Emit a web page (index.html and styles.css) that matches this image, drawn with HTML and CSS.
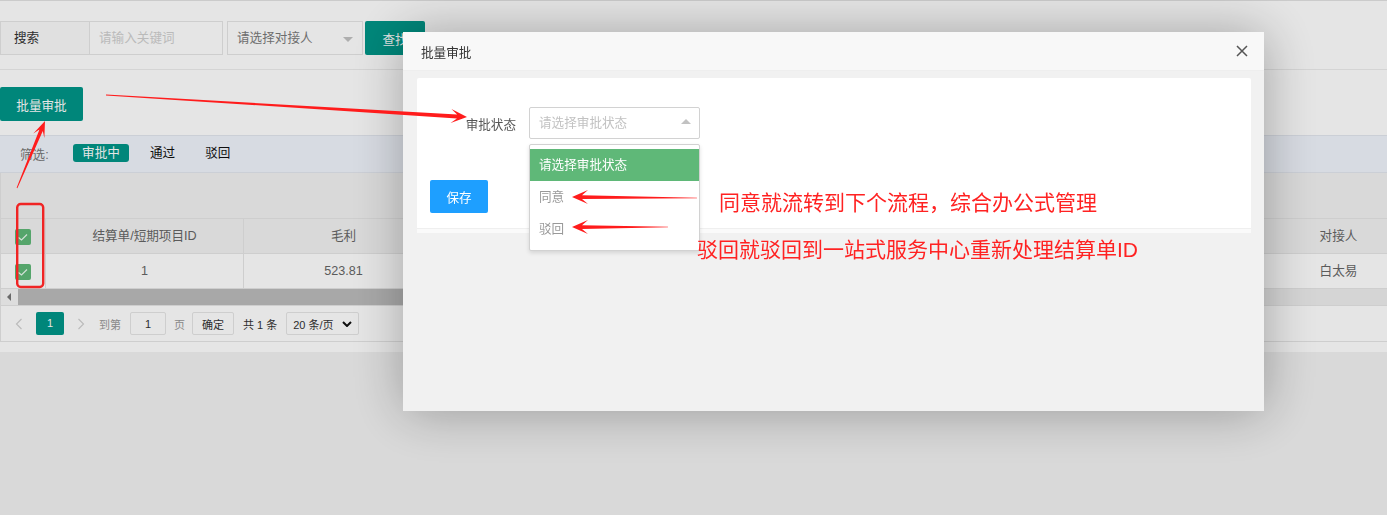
FILE: index.html
```html
<!DOCTYPE html>
<html lang="zh-CN">
<head>
    <meta charset="UTF-8">
    <meta name="viewport" content="width=device-width, initial-scale=1.0">
    <title>结算单审批</title>
    <link rel="stylesheet" href="styles.css">
</head>
<body>

    <div class="page">
        <div class="search-bar">
            <span class="search-label">搜索</span>
            <input class="search-input" type="text" placeholder="请输入关键词">
            <div class="fake-select">请选择对接人<i class="caret-down"></i></div>
            <button class="btn btn-search">查找</button>
        </div>

        <div class="toolbar">
            <button class="btn btn-batch">批量审批</button>
        </div>

        <div class="filter">
            <span class="filter-label">筛选:</span>
            <span class="tag active">审批中</span>
            <span class="tag">通过</span>
            <span class="tag">驳回</span>
        </div>

        <div class="table-box">
            <div class="table-tool"></div>
            <table class="grid">
                <colgroup>
                    <col style="width:45px">
                    <col style="width:198px">
                    <col style="width:200px">
                    <col style="width:200px">
                    <col style="width:200px">
                    <col style="width:200px">
                    <col style="width:200px">
                    <col style="width:190px">
                </colgroup>
                <thead>
                    <tr>
                        <th class="col-check"><span class="checkbox"><svg viewBox="0 0 16 16"><polyline points="3.5,8.5 6.5,11 12,5.5"/></svg></span></th>
                        <th>结算单/短期项目ID</th>
                        <th>毛利</th>
                        <th></th>
                        <th></th>
                        <th></th>
                        <th></th>
                        <th>对接人</th>
                    </tr>
                </thead>
                <tbody>
                    <tr>
                        <td class="col-check"><span class="checkbox"><svg viewBox="0 0 16 16"><polyline points="3.5,8.5 6.5,11 12,5.5"/></svg></span></td>
                        <td>1</td>
                        <td>523.81</td>
                        <td></td>
                        <td></td>
                        <td></td>
                        <td></td>
                        <td>白太易</td>
                    </tr>
                </tbody>
            </table>
            <div class="hscroll">
                <span class="hscroll-btn"></span>
                <span class="hscroll-thumb"></span>
            </div>
            <div class="pager">
                <svg class="pager-arrow" viewBox="0 0 8 12"><polyline points="6.5,1 1.5,6 6.5,11"/></svg>
                <span class="pager-curr">1</span>
                <svg class="pager-arrow pager-next" viewBox="0 0 8 12"><polyline points="1.5,1 6.5,6 1.5,11"/></svg>
                <span class="pager-muted pager-goto">到第</span>
                <input class="pager-input" type="text" value="1">
                <span class="pager-muted pager-unit">页</span>
                <button class="pager-btn">确定</button>
                <span class="pager-count">共 1 条</span>
                <div class="pager-limit">20 条/页<svg viewBox="0 0 10 6"><polyline points="1,1 5,5 9,1"/></svg></div>
            </div>
        </div>
    </div>

    <!-- 遮罩 + 批量审批弹层 -->
    <div class="shade"></div>
    <div class="layer">
        <div class="layer-title">
            <span>批量审批</span>
            <svg class="layer-close" viewBox="0 0 12 12"><path d="M1 1 L11 11 M11 1 L1 11"/></svg>
        </div>
        <div class="layer-body">
            <div class="card">
                <div class="card-body">
                    <div class="form-row">
                        <label class="form-label">审批状态</label>
                        <div class="select-wrap">
                            <div class="select-box">请选择审批状态<i class="caret-up"></i></div>
                            <dl class="select-menu">
                                <dd class="picked">请选择审批状态</dd>
                                <dd>同意</dd>
                                <dd>驳回</dd>
                            </dl>
                        </div>
                    </div>
                    <button class="btn-save">保存</button>
                </div>
                <div class="card-foot"></div>
            </div>
        </div>
    </div>

    <!-- 标注 -->
    <svg class="marks" viewBox="0 0 1387 515">
        <rect x="17.2" y="204" width="26" height="83" rx="3.5"/>
        <polygon points="105.98,95.4 456.9,118.39 450.6,123.02 467,117 451.46,109.04 457.14,114.39 106.02,94.6"/>
        <polygon points="17.37,188.15 42.8,130.92 44.37,138.07 45,121 33.29,133.45 39.48,129.54 16.63,187.85"/>
        <polygon points="697,197.7 582,195.2 588,190 572,197 588,204 582,199 697,198.3"/>
        <polygon points="668,226.7 582,225.2 588,220 572,227 588,234 582,229 668,227.3"/>
    </svg>
    <p class="note note-agree">同意就流转到下个流程，综合办公式管理</p>
    <p class="note note-reject">驳回就驳回到一站式服务中心重新处理结算单ID</p>

</body>
</html>
```

FILE: styles.css
```css
* {
    box-sizing: border-box;
}
html, body {
    margin: 0;
    height: 100%;
    overflow: hidden;
}
body {
    background-color: #f2f2f2;
    font-family: "Liberation Sans", "Noto Sans CJK SC", sans-serif;
    font-size: 12.6px;
    color: #333;
}
.page {
    background: #fff;
    border-top: 1px solid #e2e2e2;
    padding-bottom: 10px;
}

/* 搜索栏 */
.search-bar {
    display: flex;
    padding: 20px 0 14px;
    border-bottom: 1px solid #ececec;
}
.search-label {
    width: 89px;
    height: 34px;
    line-height: 32px;
    padding-left: 13px;
    border: 1px solid #e6e6e6;
    border-right: none;
    background: #fafafa;
    color: #333;
}
.search-input {
    width: 134px;
    height: 34px;
    padding: 0 9px;
    border: 1px solid #e6e6e6;
    font: inherit;
    outline: none;
}
.search-input::placeholder {
    color: #d0d0d0;
}
.fake-select {
    position: relative;
    margin-left: 4px;
    width: 136px;
    height: 34px;
    line-height: 32px;
    padding-left: 9px;
    border: 1px solid #e6e6e6;
    color: #7a7a7a;
}
.caret-down {
    position: absolute;
    right: 9px;
    top: 15px;
    border-top: 5px solid #c2c2c2;
    border-left: 5px solid transparent;
    border-right: 5px solid transparent;
}
.btn {
    height: 34px;
    line-height: 34px;
    padding: 0;
    border: none;
    border-radius: 2px;
    background-color: #009688;
    color: #fff;
    font: inherit;
}
.btn-search {
    margin-left: 2px;
    width: 60px;
}
.toolbar {
    padding: 17px 0 14px;
}
.btn-batch {
    width: 83px;
}

/* 筛选 */
.filter {
    display: flex;
    align-items: center;
    height: 38px;
    padding: 0 0 2px 20px;
    border-top: 1px solid #e3e7ef;
    border-bottom: 1px solid #e3e7ef;
    background: #f0f4fc;
}
.filter-label {
    width: 53px;
    color: #777;
}
.tag {
    height: 18px;
    line-height: 18px;
    padding: 0 9px;
    margin-right: 12px;
    border-radius: 3px;
    color: #111;
}
.tag.active {
    width: 56px;
    text-align: center;
    background: #009688;
    color: #fff;
}

/* 表格 */
.table-box {
    border-left: 1px solid #e6e6e6;
    overflow: hidden;
}
.table-tool {
    height: 46px;
    background: #f2f2f2;
    border-bottom: 1px solid #e6e6e6;
}
.grid {
    width: 1433px;
    table-layout: fixed;
    border-collapse: separate;
    border-spacing: 0;
}
.grid th,
.grid td {
    height: 35px;
    padding: 0;
    line-height: 34px;
    text-align: center;
    font-weight: normal;
    color: #666;
    border-bottom: 1px solid #e6e6e6;
    border-right: 1px solid #e6e6e6;
    white-space: nowrap;
    overflow: hidden;
}
.grid th {
    background: #f2f2f2;
}
.grid td {
    background: #fff;
}
.grid .col-check {
    text-align: left;
    padding-left: 14px;
}
.checkbox {
    display: inline-block;
    width: 16px;
    height: 16px;
    vertical-align: middle;
    border-radius: 2px;
    background: #5fb878;
}
.checkbox svg {
    display: block;
    width: 16px;
    height: 16px;
    fill: none;
    stroke: #eafbef;
    stroke-width: 1.2;
}
.hscroll {
    display: flex;
    height: 16px;
    background: #eeeeee;
}
.hscroll-btn {
    position: relative;
    width: 17px;
    background: #f7f7f7;
}
.hscroll-btn::after {
    content: "";
    position: absolute;
    left: 6px;
    top: 4px;
    border-right: 4px solid #777;
    border-top: 4px solid transparent;
    border-bottom: 4px solid transparent;
}
.hscroll-thumb {
    width: 980px;
    background: #bcbcbc;
}

/* 分页 */
.pager {
    display: flex;
    align-items: center;
    height: 37px;
    padding-left: 14px;
    border-top: 1px solid #e6e6e6;
    border-bottom: 1px solid #e6e6e6;
    font-size: 11px;
    color: #333;
}
.pager-arrow {
    width: 8px;
    height: 12px;
    fill: none;
    stroke: #d2d2d2;
    stroke-width: 1.2;
}
.pager-next {
    margin-left: 13px;
}
.pager-curr {
    margin-left: 13px;
    width: 28px;
    height: 23px;
    line-height: 23px;
    text-align: center;
    border-radius: 2px;
    background: #009688;
    color: #fff;
}
.pager-muted {
    color: #999;
}
.pager-goto {
    margin-left: 14px;
}
.pager-input {
    margin-left: 9px;
    width: 36px;
    height: 23px;
    border: 1px solid #e6e6e6;
    border-radius: 2px;
    text-align: center;
    font: inherit;
    color: #333;
}
.pager-unit {
    margin-left: 8px;
}
.pager-btn {
    margin-left: 7px;
    width: 42px;
    height: 23px;
    padding: 0;
    border: 1px solid #e6e6e6;
    border-radius: 2px;
    background: #fff;
    font: inherit;
    color: #333;
}
.pager-count {
    margin-left: 9px;
}
.pager-limit {
    display: flex;
    align-items: center;
    justify-content: space-between;
    margin-left: 9px;
    width: 73px;
    height: 23px;
    padding: 0 6px 0 6px;
    border: 1px solid #e6e6e6;
    border-radius: 2px;
}
.pager-limit svg {
    width: 10px;
    height: 6px;
    fill: none;
    stroke: #111;
    stroke-width: 2;
}

/* 弹层 */
.shade {
    position: fixed;
    inset: 0;
    background: rgba(0, 0, 0, 0.1);
    z-index: 10;
}
.layer {
    position: fixed;
    left: 403px;
    top: 32px;
    width: 861px;
    height: 379px;
    background: #f1f1f1;
    box-shadow: 1px 1px 50px rgba(0, 0, 0, 0.3);
    z-index: 20;
}
.layer-title {
    display: flex;
    align-items: center;
    justify-content: space-between;
    height: 39px;
    padding: 0 16px 0 18px;
    border-bottom: 1px solid #eee;
    background: #f8f8f8;
    color: #333;
}
.layer-close {
    width: 12px;
    height: 12px;
    fill: none;
    stroke: #555;
    stroke-width: 1.5;
}
.layer-body {
    padding: 7px 13px 0 14px;
}
.card {
    background: #fff;
    border-radius: 2px;
}
.card-body {
    padding: 29px 13px 15px;
}
.card-foot {
    height: 5px;
    border-top: 1px solid #efefef;
    background: #fafafa;
}
.form-row {
    display: flex;
    align-items: center;
}
.form-label {
    width: 86px;
    margin-right: 13px;
    text-align: right;
    color: #555;
}
.select-wrap {
    position: relative;
    width: 171px;
}
.select-box {
    height: 32px;
    line-height: 30px;
    padding-left: 9px;
    border: 1px solid #d2d2d2;
    border-radius: 2px;
    color: #c2c2c2;
}
.caret-up {
    position: absolute;
    right: 9px;
    top: 12px;
    border-bottom: 5px solid #c2c2c2;
    border-left: 5px solid transparent;
    border-right: 5px solid transparent;
}
.select-menu {
    position: absolute;
    top: 37px;
    left: 0;
    width: 100%;
    margin: 0;
    padding: 4px 0 5px;
    border: 1px solid #d2d2d2;
    border-radius: 2px;
    background: #fff;
    box-shadow: 0 2px 4px rgba(0, 0, 0, 0.12);
    z-index: 2;
}
.select-menu dd {
    margin: 0;
    padding-left: 9px;
    line-height: 32px;
    color: #999;
}
.select-menu .picked {
    background: #5fb878;
    color: #fff;
}
.btn-save {
    display: block;
    margin-top: 41px;
    width: 58px;
    height: 33px;
    padding: 0;
    border: none;
    border-radius: 2px;
    background: #1e9fff;
    color: #fff;
    font: inherit;
}

/* 标注 */
.marks {
    position: absolute;
    left: 0;
    top: 0;
    width: 1387px;
    height: 515px;
    z-index: 30;
    pointer-events: none;
}
.marks rect {
    fill: none;
    stroke: #f02424;
    stroke-width: 2.4;
}
.marks polygon {
    fill: #ff1c1c;
}
.note {
    position: absolute;
    margin: 0;
    font-size: 21px;
    line-height: 24px;
    color: #ff2222;
    white-space: nowrap;
    z-index: 30;
}
.note-agree {
    left: 719px;
    top: 191px;
}
.note-reject {
    left: 697px;
    top: 238px;
}
```
